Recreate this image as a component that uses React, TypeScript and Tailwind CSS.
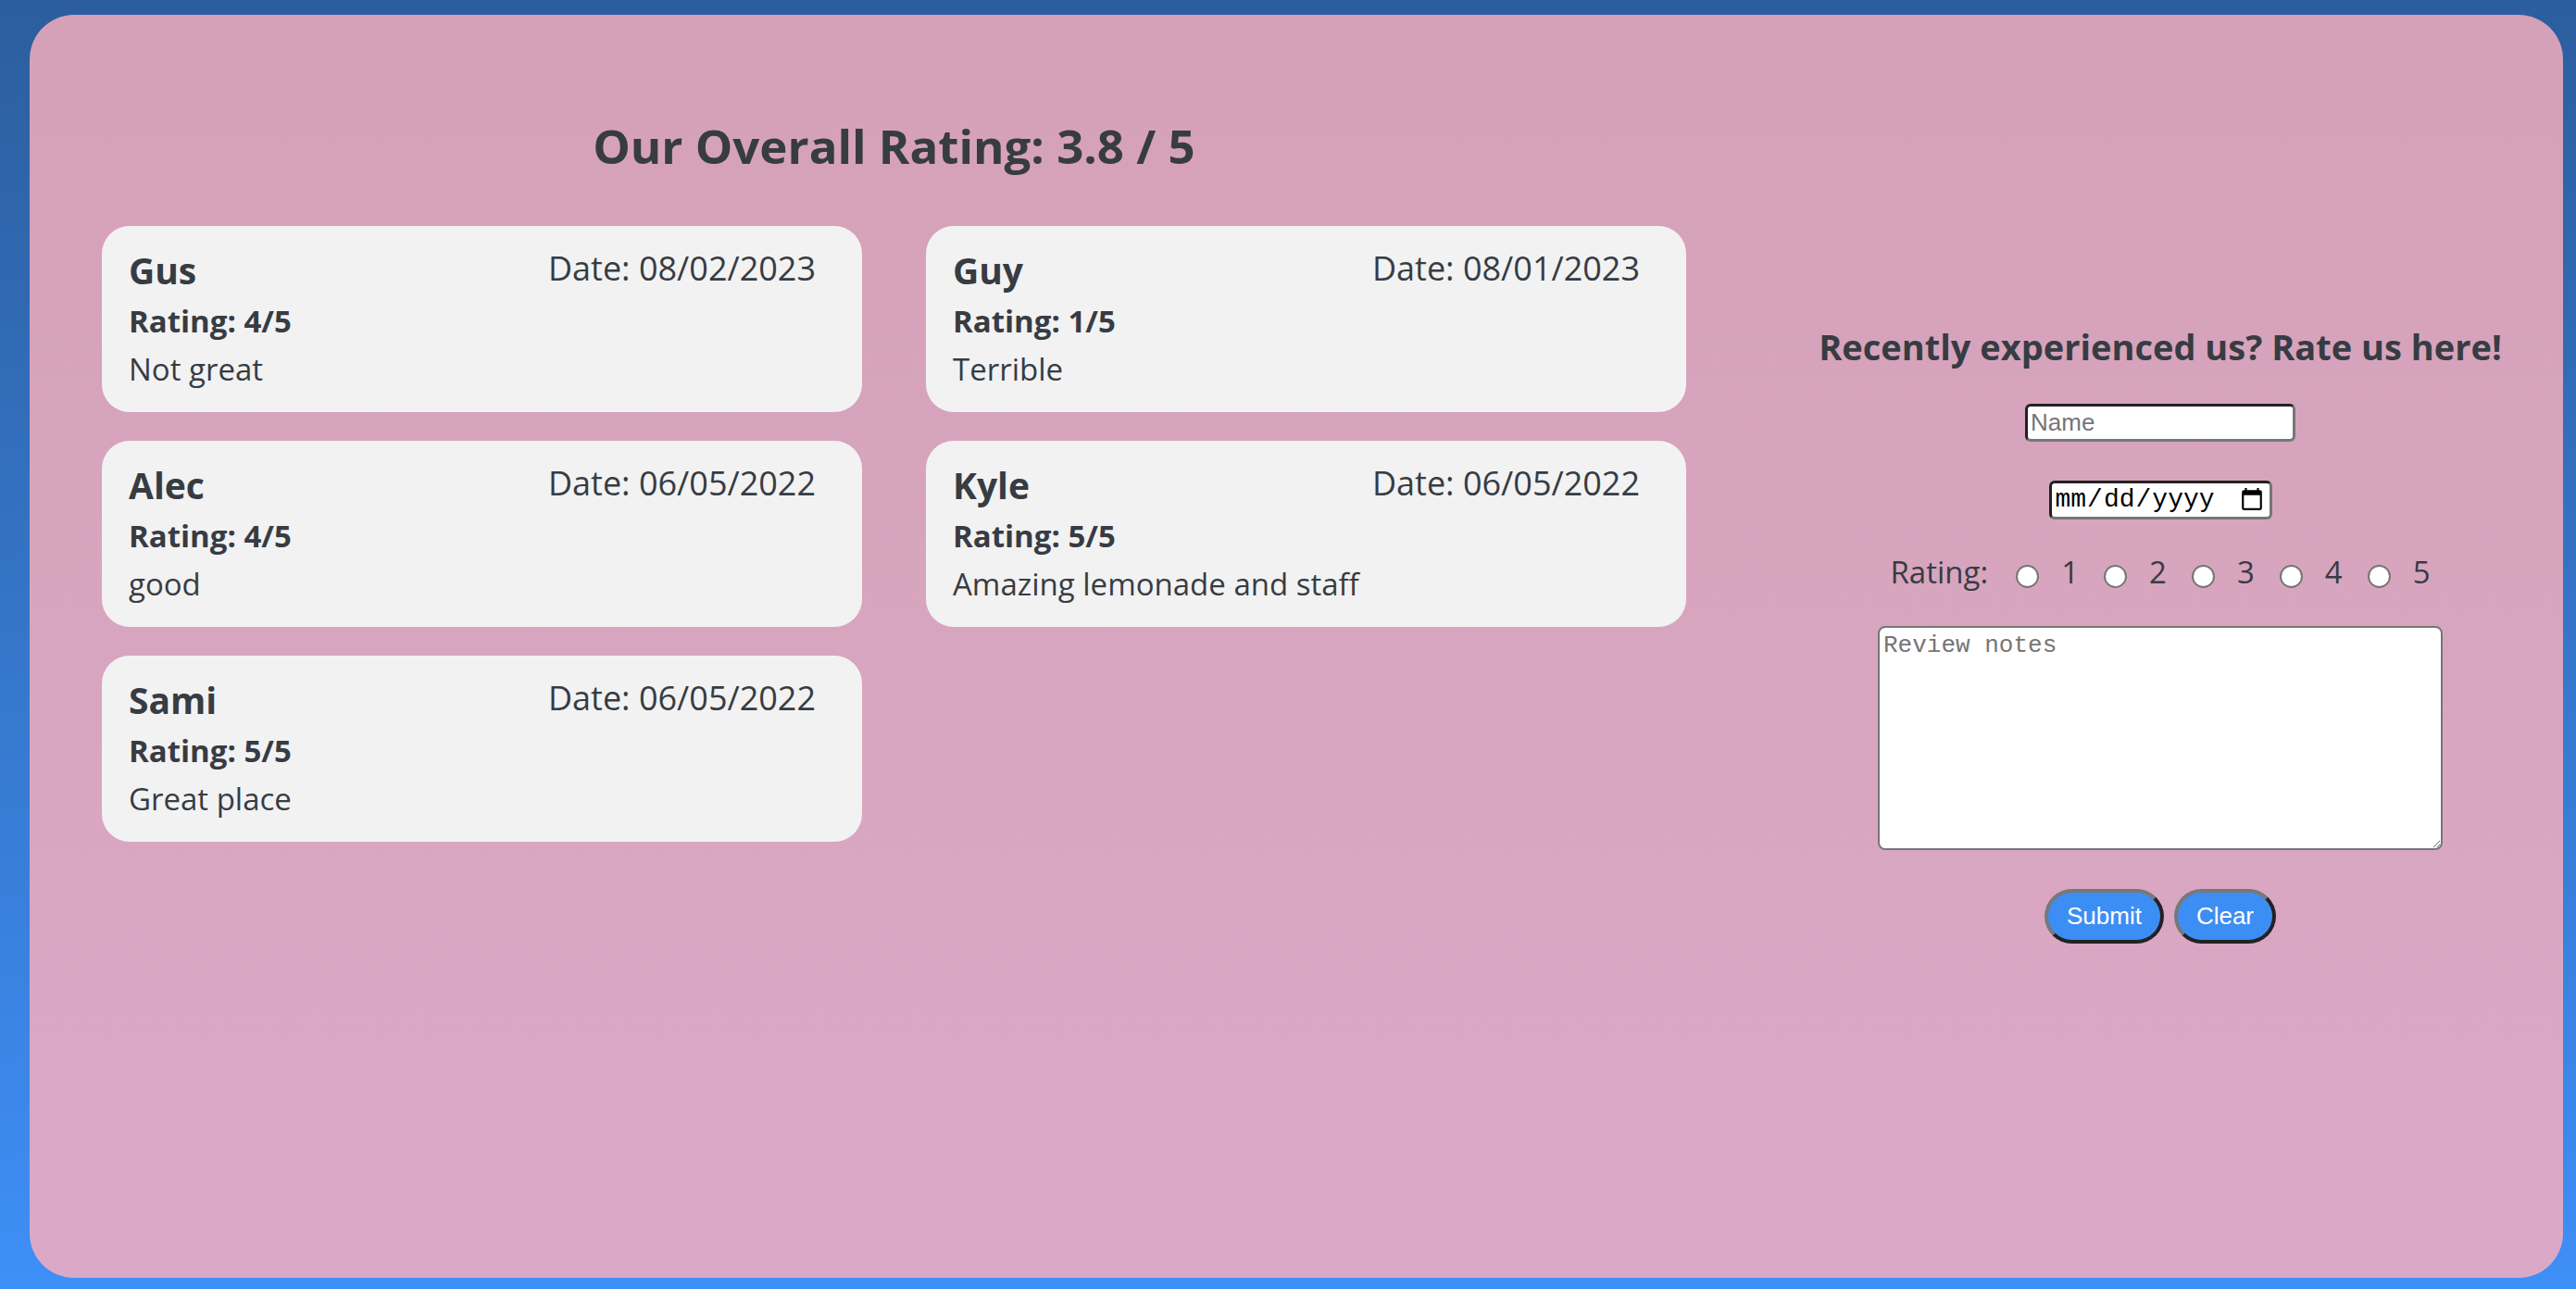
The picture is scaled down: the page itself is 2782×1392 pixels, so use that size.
import React from 'react';

interface Review {
  name: string;
  date: string;
  rating: number;
  note: string;
}

const reviews: Review[] = [
  { name: 'Gus', date: '08/02/2023', rating: 4, note: 'Not great' },
  { name: 'Guy', date: '08/01/2023', rating: 1, note: 'Terrible' },
  { name: 'Alec', date: '06/05/2022', rating: 4, note: 'good' },
  { name: 'Kyle', date: '06/05/2022', rating: 5, note: 'Amazing lemonade and staff' },
  { name: 'Sami', date: '06/05/2022', rating: 5, note: 'Great place' },
];

function ReviewCard({ name, date, rating, note }: Review) {
  return (
    <li className="h-[201px] rounded-[30px] bg-[#f2f2f2] pl-[29px] pr-[50px] pt-[22px]">
      <div className="flex items-start justify-between">
        <span className="text-[39px] font-bold leading-[52px]">{name}</span>
        <span className="text-[36px] leading-[47px]">Date: {date}</span>
      </div>
      <p className="mt-[3px] text-[33px] font-bold leading-[52px]">Rating: {rating}/5</p>
      <p className="text-[33px] leading-[52px]">{note}</p>
    </li>
  );
}

export default function App() {
  const options = [1, 2, 3, 4, 5];

  return (
    <div className="h-[1392px] w-full bg-linear-to-b from-[#2c5e9e] to-[#3e8ff7] pb-[12px] pl-[32px] pr-[14px] pt-[16px]">
      <div
        className="flex h-[1364px] rounded-[48px] bg-linear-to-b from-[#d5a1b8] to-[#dba9c7] pl-[78px] text-[#373c43]"
        style={{ fontFamily: '"Open Sans", sans-serif' }}
      >
        {/* reviews */}
        <section className="w-[1711px] pt-[111px]">
          <h2 className="h-[60px] text-center text-[51px] font-bold leading-[60px]">
            Our Overall Rating: 3.8 / 5
          </h2>
          <ul className="mt-[57px] grid grid-cols-2 gap-x-[69px] gap-y-[31px]">
            {reviews.map((r) => (
              <ReviewCard key={r.name} {...r} />
            ))}
          </ul>
        </section>

        {/* form */}
        <section className="ml-auto mr-[55px] flex w-[760px] flex-col items-center pt-[332px]">
          <h3 className="text-[38px] font-bold leading-[52px]">Recently experienced us? Rate us here!</h3>

          <input
            type="text"
            placeholder="Name"
            className="mt-[36px] h-[41px] w-[292px] rounded-[6px] border-[3px] border-b-[#767676] border-l-[#222] border-r-[#767676] border-t-[#222] bg-white px-[3px] text-[26px] text-black placeholder:text-[#757575]"
            style={{ fontFamily: '"Liberation Sans", Arial, sans-serif' }}
          />

          <input
            type="date"
            className="mt-[42px] h-[42px] w-[241px] rounded-[6px] border-[3px] border-b-[#767676] border-l-[#222] border-r-[#767676] border-t-[#222] bg-white px-[3px] text-[28px] text-black"
            style={{ fontFamily: '"Liberation Mono", monospace' }}
          />

          <div className="mt-[37px] flex items-start text-[33px] leading-[40px]">
            <span>Rating:</span>
            {options.map((n, i) => (
              <label key={n} className="flex items-start">
                <input
                  type="radio"
                  name="rating"
                  value={n}
                  className={`mt-[12px] h-[25px] w-[25px] appearance-none rounded-full border-2 border-[#767676] bg-white ${
                    i === 0 ? 'ml-[30px]' : 'ml-[27px]'
                  }`}
                />
                <span className="ml-[24px]">{n}</span>
              </label>
            ))}
          </div>

          <textarea
            placeholder="Review notes"
            className="mt-[38px] h-[242px] w-[610px] rounded-[8px] border-2 border-[#767676] bg-white p-[4px] text-[26px] leading-[30px] text-black placeholder:text-[#757575]"
            style={{ fontFamily: '"Liberation Mono", monospace' }}
          />

          <div
            className="mt-[42px] flex gap-[11px] text-[26px] text-white"
            style={{ fontFamily: '"Liberation Sans", Arial, sans-serif' }}
          >
            <button className="h-[59px] rounded-full border-4 border-b-[#222] border-l-[#787878] border-r-[#222] border-t-[#787878] bg-[#3d8ef4] px-[20px]">
              Submit
            </button>
            <button className="h-[59px] rounded-full border-4 border-b-[#222] border-l-[#787878] border-r-[#222] border-t-[#787878] bg-[#3d8ef4] px-[20px]">
              Clear
            </button>
          </div>
        </section>
      </div>
    </div>
  );
}
